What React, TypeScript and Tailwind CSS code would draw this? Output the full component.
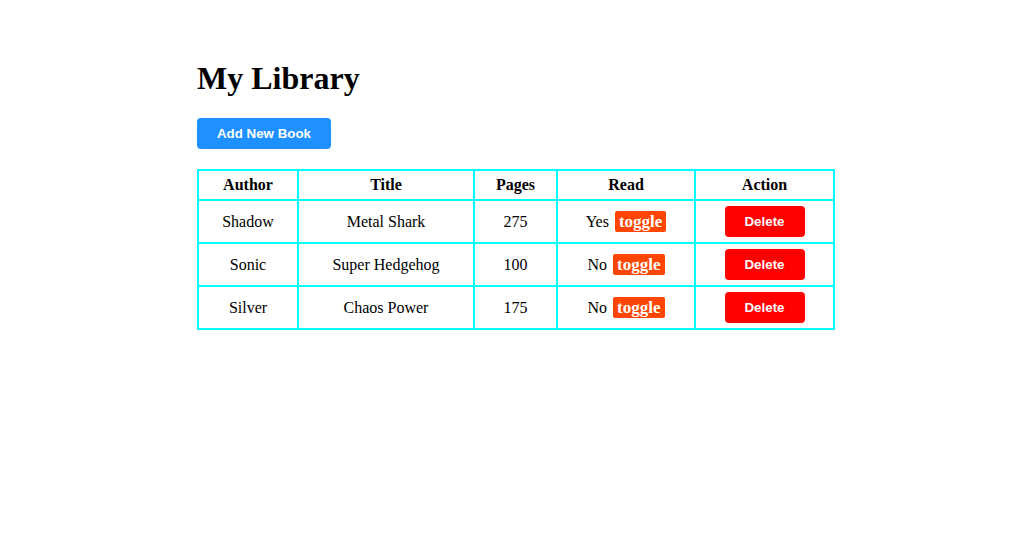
const books = [
  { author: 'Shadow', title: 'Metal Shark', pages: 275, read: true },
  { author: 'Sonic', title: 'Super Hedgehog', pages: 100, read: false },
  { author: 'Silver', title: 'Chaos Power', pages: 175, read: false },
]

const cell = 'border-2 border-[#00ffff] text-center p-0'

export default function App() {
  return (
    <div className="min-h-screen bg-white text-black font-['Liberation_Serif',serif] text-base">
      <div className="pl-[197px] pt-[60px]">
        <h1 className="text-[32px] font-bold leading-[37px]">My Library</h1>
        <button
          type="button"
          className="mt-[21px] w-[134px] h-[31px] bg-[#1e90ff] text-white rounded-[4px] text-[13.33px] font-bold font-['Liberation_Sans',sans-serif]"
        >
          Add New Book
        </button>

        <table className="mt-[20px] border-collapse border-2 border-[#00ffff]">
          <thead>
            <tr className="h-[30px]">
              <th className={`${cell} w-[100px]`}>Author</th>
              <th className={`${cell} w-[176px]`}>Title</th>
              <th className={`${cell} w-[83px]`}>Pages</th>
              <th className={`${cell} w-[138px]`}>Read</th>
              <th className={`${cell} w-[139px]`}>Action</th>
            </tr>
          </thead>
          <tbody>
            {books.map((b) => (
              <tr key={b.title} className="h-[43px]">
                <td className={cell}>{b.author}</td>
                <td className={cell}>{b.title}</td>
                <td className={cell}>{b.pages}</td>
                <td className={cell}>
                  <span className="inline-flex items-center gap-[6px]">
                    {b.read ? 'Yes' : 'No'}
                    <span className="inline-block bg-[#ff4500] text-white font-bold text-[17px] leading-[21px] px-[4px] rounded-[2px]">
                      toggle
                    </span>
                  </span>
                </td>
                <td className={cell}>
                  <button
                    type="button"
                    className="w-[80px] h-[31px] bg-[#ff0000] text-white rounded-[4px] text-[13.33px] font-bold font-['Liberation_Sans',sans-serif]"
                  >
                    Delete
                  </button>
                </td>
              </tr>
            ))}
          </tbody>
        </table>
      </div>
    </div>
  )
}
